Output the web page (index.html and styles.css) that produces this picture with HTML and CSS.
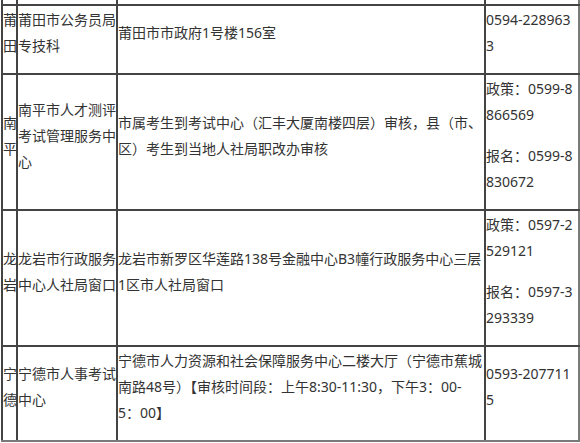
FILE: index.html
```html
<!DOCTYPE html>
<html lang="zh-CN">
<head>
<meta charset="utf-8">
<title>资格审核地点</title>
<link rel="stylesheet" href="styles.css">
</head>
<body>
<div class="frame">
<table class="sites">
  <colgroup>
    <col class="c-city">
    <col class="c-org">
    <col class="c-addr">
    <col class="c-tel">
  </colgroup>
  <tbody>
    <tr class="prev"><td></td><td></td><td></td><td></td></tr>
    <tr>
      <td><p>莆田</p></td>
      <td><p>莆田市公务员局专技科</p></td>
      <td><p>莆田市市政府1号楼156室</p></td>
      <td class="tel"><p>0594-2289633</p></td>
    </tr>
    <tr>
      <td><p>南平</p></td>
      <td><p>南平市人才测评考试管理服务中心</p></td>
      <td><p>市属考生到考试中心（汇丰大厦南楼四层）审核，县（市、区）考生到当地人社局职改办审核</p></td>
      <td class="tel"><p>政策：0599-8866569</p><p>报名：0599-8830672</p></td>
    </tr>
    <tr>
      <td><p>龙岩</p></td>
      <td><p>龙岩市行政服务中心人社局窗口</p></td>
      <td><p>龙岩市新罗区华莲路138号金融中心B3幢行政服务中心三层1区市人社局窗口</p></td>
      <td class="tel"><p>政策：0597-2529121</p><p>报名：0597-3293339</p></td>
    </tr>
    <tr class="last">
      <td><p>宁德</p></td>
      <td><p>宁德市人事考试中心</p></td>
      <td><p>宁德市人力资源和社会保障服务中心二楼大厅（宁德市蕉城南路48号）【审核时间段：上午8:30-11:30，下午3：00-<span class="keep">5：00】</span></p></td>
      <td class="tel"><p>0593-2077115</p></td>
    </tr>
  </tbody>
</table>
</div>
</body>
</html>
```

FILE: styles.css
```css
html, body {
  margin: 0;
  padding: 0;
  background: #ffffff;
}

.frame {
  width: 580px;
  height: 443px;
  overflow: hidden;
}

.sites {
  border-collapse: collapse;
  table-layout: fixed;
  width: 577px;
  margin: -28px 0 0 1px;
  font-family: "Noto Sans", "Noto Sans CJK SC", sans-serif;
  font-size: 14px;
  line-height: 26px;
  color: #333333;
}

.c-city { width: 15px; }
.c-org { width: 100px; }
.c-addr { width: 368px; }
.c-tel { width: 94px; }

.sites td {
  border: 2px solid #444444;
  padding: 0;
  vertical-align: middle;
  word-break: break-all;
  overflow-wrap: anywhere;
}

.sites td:last-child {
  border-right-color: #7a7a7a;
}

.sites tr.last td {
  border-bottom-color: #7a7a7a;
}

.sites tr.prev td {
  height: 30px;
}

.sites p {
  margin: 0 0 14px;
  padding-top: 1px;
}

.sites td.tel {
  padding-right: 2px;
}

.keep {
  white-space: nowrap;
}
```
